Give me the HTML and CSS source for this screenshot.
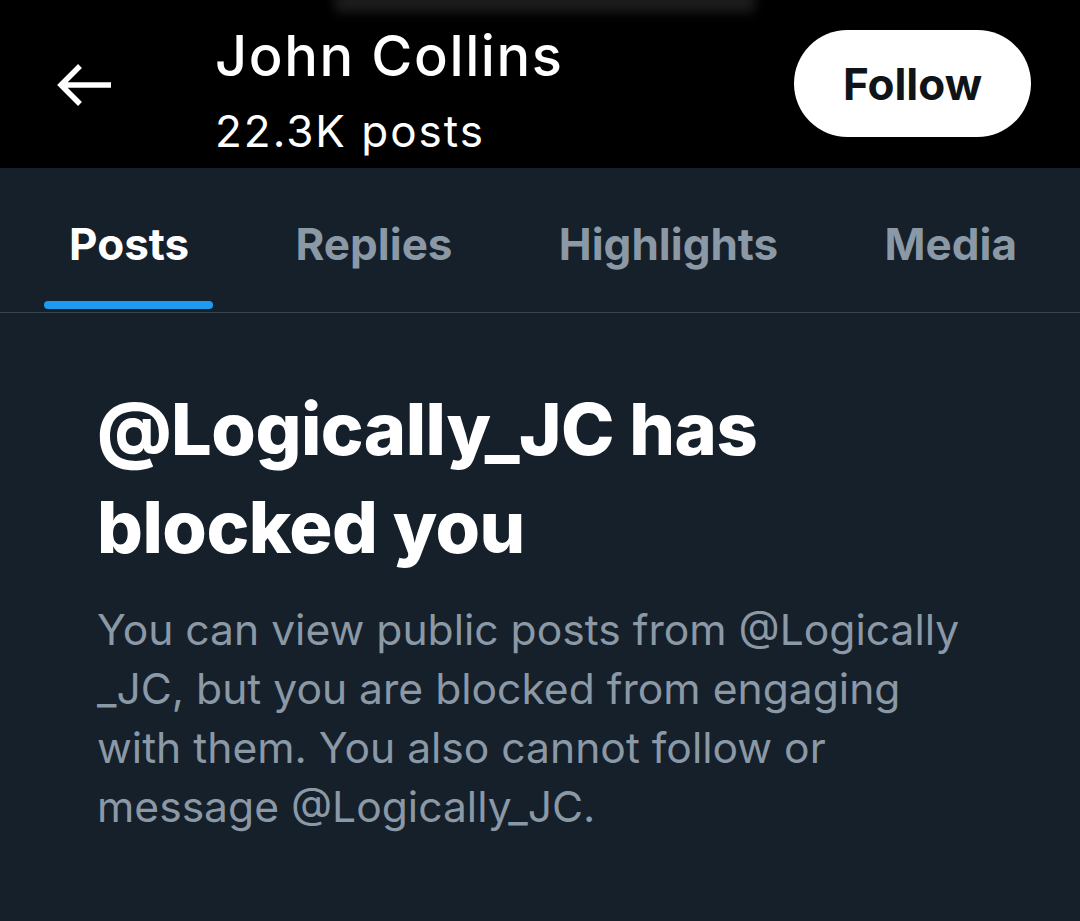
FILE: index.html
```html
<!DOCTYPE html>
<html lang="en">
<head>
<meta charset="utf-8">
<title>John Collins</title>
<link rel="stylesheet" href="styles.css">
</head>
<body>
<div class="page">
  <div class="status-blur"></div>
  <header class="topbar">
    <button class="back" aria-label="Back">
      <svg width="56" height="48" viewBox="0 0 56 48" aria-hidden="true">
        <path d="M54 24 H4 M23 5 L4 24 L23 43" fill="none" stroke="#fff" stroke-width="5.5" stroke-linecap="butt" stroke-linejoin="miter"/>
      </svg>
    </button>
    <div class="title">
      <div class="name">John Collins</div>
      <div class="count">22.3K posts</div>
    </div>
    <button class="follow">Follow</button>
  </header>
  <nav class="tabs">
    <div class="tab active"><span class="label">Posts</span><span class="bar"></span></div>
    <div class="tab"><span class="label">Replies</span><span class="bar"></span></div>
    <div class="tab"><span class="label">Highlights</span><span class="bar"></span></div>
    <div class="tab"><span class="label">Media</span><span class="bar"></span></div>
  </nav>
  <main class="blocked">
    <h1 class="heading">@Logically_JC has blocked you</h1>
    <p class="desc">You can view public posts from @Logically _JC, but you are blocked from engaging with them. You also cannot follow or message @Logically_JC.</p>
  </main>
</div>
</body>
</html>
```

FILE: styles.css
```css
* { box-sizing: border-box; }
html, body {
  margin: 0;
  padding: 0;
  background: #15202b;
}
body {
  font-family: Inter, "Noto Sans", "DejaVu Sans", sans-serif;
  color: #fff;
}
.page {
  position: relative;
  width: 1080px;
  min-height: 921px;
  background: #15202b;
  overflow: hidden;
}
.status-blur {
  position: absolute;
  left: 335px;
  top: -8px;
  width: 420px;
  height: 20px;
  background: #2a2a2a;
  filter: blur(6px);
  opacity: 0.7;
}
.topbar {
  height: 168px;
  background: #000;
  display: flex;
  align-items: center;
  padding: 0 49px 0 57px;
}
.back {
  background: none;
  border: 0;
  padding: 0;
  width: 56px;
  height: 48px;
  display: flex;
  margin-top: 1px;
}
.title {
  align-self: flex-start;
  padding-top: 26px;
  margin-left: 102px;
  flex: 1;
  display: flex;
  flex-direction: column;
}
.name {
  font-size: 56px;
  font-weight: 500;
  line-height: 60px;
  letter-spacing: 1.6px;
}
.count {
  font-size: 44px;
  font-weight: 400;
  line-height: 50px;
  letter-spacing: 2px;
  margin-top: 20px;
}
.follow {
  width: 237px;
  height: 107px;
  border-radius: 54px;
  border: 0;
  background: #fff;
  color: #0f1419;
  font-family: inherit;
  font-size: 44px;
  font-weight: 700;
  margin-top: -1px;
}
.tabs {
  height: 145px;
  display: flex;
  justify-content: space-between;
  border-bottom: 1px solid #38444d;
  padding: 0 39px 0 44px;
}
.tab {
  display: flex;
  flex-direction: column;
  align-items: center;
  justify-content: flex-end;
}
.tab .label {
  font-size: 44px;
  font-weight: 700;
  line-height: 52px;
  color: #8b98a5;
  padding: 0 24px 0 25px;
}
.tab .bar {
  display: block;
  width: 100%;
  height: 8px;
  margin-top: 31px;
  margin-bottom: 3px;
  border-radius: 4px;
}
.tab.active .label { color: #fff; }
.tab.active .bar { background: #1d9bf0; }
.blocked {
  padding: 67px 97px 0 97px;
}
.heading {
  margin: 0;
  font-size: 72px;
  font-weight: 800;
  line-height: 98px;
  letter-spacing: -0.5px;
  color: #fff;
}
.desc {
  margin: 24px 0 0 0;
  font-size: 42.6px;
  line-height: 59px;
  font-weight: 400;
  color: #8b98a5;
  max-width: 880px;
}
```
